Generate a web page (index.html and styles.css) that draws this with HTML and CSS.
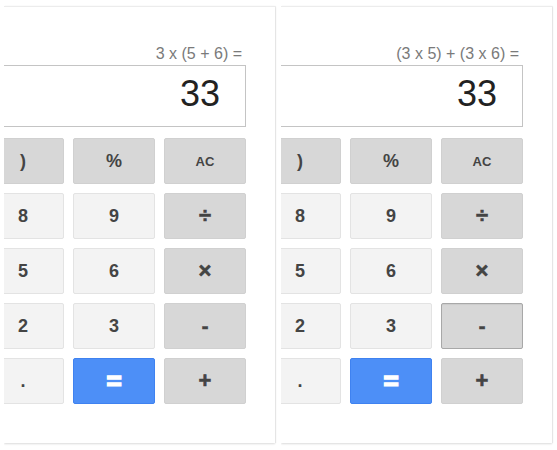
FILE: index.html
```html
<!DOCTYPE html>
<html>
<head>
<meta charset="utf-8">
<link rel="stylesheet" href="styles.css">
</head>
<body>
<div class="stage">
  <div class="frame">
    <div class="panel">
      <div class="body">
        <div class="expr">3 x (5 + 6) =</div>
        <div class="display">33</div>
        <div class="keys">
          <div class="key op">)</div><div class="key op">%</div><div class="key op ac">AC</div>
          <div class="key num">8</div><div class="key num">9</div><div class="key op sym">÷</div>
          <div class="key num">5</div><div class="key num">6</div><div class="key op sym">×</div>
          <div class="key num">2</div><div class="key num">3</div><div class="key op sym minus">-</div>
          <div class="key num">.</div><div class="key eq">=</div><div class="key op sym">+</div>
        </div>
      </div>
    </div>
  </div>
  <div class="frame">
    <div class="panel">
      <div class="body">
        <div class="expr">(3 x 5) + (3 x 6) =</div>
        <div class="display">33</div>
        <div class="keys">
          <div class="key op">)</div><div class="key op">%</div><div class="key op ac">AC</div>
          <div class="key num">8</div><div class="key num">9</div><div class="key op sym">÷</div>
          <div class="key num">5</div><div class="key num">6</div><div class="key op sym">×</div>
          <div class="key num">2</div><div class="key num">3</div><div class="key op sym minus hover">-</div>
          <div class="key num">.</div><div class="key eq">=</div><div class="key op sym">+</div>
        </div>
      </div>
    </div>
  </div>
</div>
</body>
</html>
```
FILE: styles.css
```css
html, body {
  margin: 0;
  padding: 0;
  background: #ffffff;
}
body {
  font-family: "Liberation Sans", Arial, sans-serif;
}
.stage {
  display: flex;
  gap: 4px;
  padding-left: 4px;
}
.frame {
  width: 273px;
  height: 450px;
  overflow: hidden;
  padding-top: 6px;
  box-sizing: border-box;
  flex-shrink: 0;
}
.panel {
  width: 271px;
  height: 437px;
  box-sizing: border-box;
  background: #fff;
  border-top: 1px solid #ececec;
  box-shadow: 0 1px 2px rgba(0, 0, 0, 0.14), 1px 0 1px rgba(0, 0, 0, 0.06);
}
.body {
  display: flex;
  flex-direction: column;
  align-items: flex-end;
  padding: 37px 29px 0 0;
}
.expr {
  height: 20px;
  line-height: 20px;
  margin-bottom: 1px;
  padding-right: 4px;
  font-size: 16px;
  color: #7a7a7a;
  white-space: nowrap;
}
.display {
  width: 500px;
  height: 62px;
  flex-shrink: 0;
  box-sizing: border-box;
  border: 1px solid #c4c4c4;
  padding-right: 25px;
  text-align: right;
  font-size: 36px;
  line-height: 55px;
  color: #222;
}
.keys {
  margin-top: 11px;
  display: grid;
  grid-template-columns: repeat(3, 82px);
  grid-auto-rows: 46px;
  column-gap: 9px;
  row-gap: 9px;
  flex-shrink: 0;
}
.key {
  box-sizing: border-box;
  border: 1px solid;
  border-radius: 2px;
  display: flex;
  align-items: center;
  justify-content: center;
  font-size: 18px;
  font-weight: bold;
  color: #444;
}
.num {
  background: #f3f3f3;
  border-color: #e3e3e3;
}
.op {
  background: #d7d7d7;
  border-color: #d0d0d0;
}
.ac {
  font-size: 13px;
}
.sym {
  font-size: 22px;
  -webkit-text-stroke: 0.6px #444;
}
.minus {
  font-size: 20px;
}
.hover {
  border-color: #a8a8a8;
  box-shadow: inset 0 1px 1px rgba(0, 0, 0, 0.06);
}
.eq {
  background: #4d8ff7;
  border-color: #3f82f0;
  color: #fff;
  font-size: 26px;
  -webkit-text-stroke: 1.6px #fff;
}
```
